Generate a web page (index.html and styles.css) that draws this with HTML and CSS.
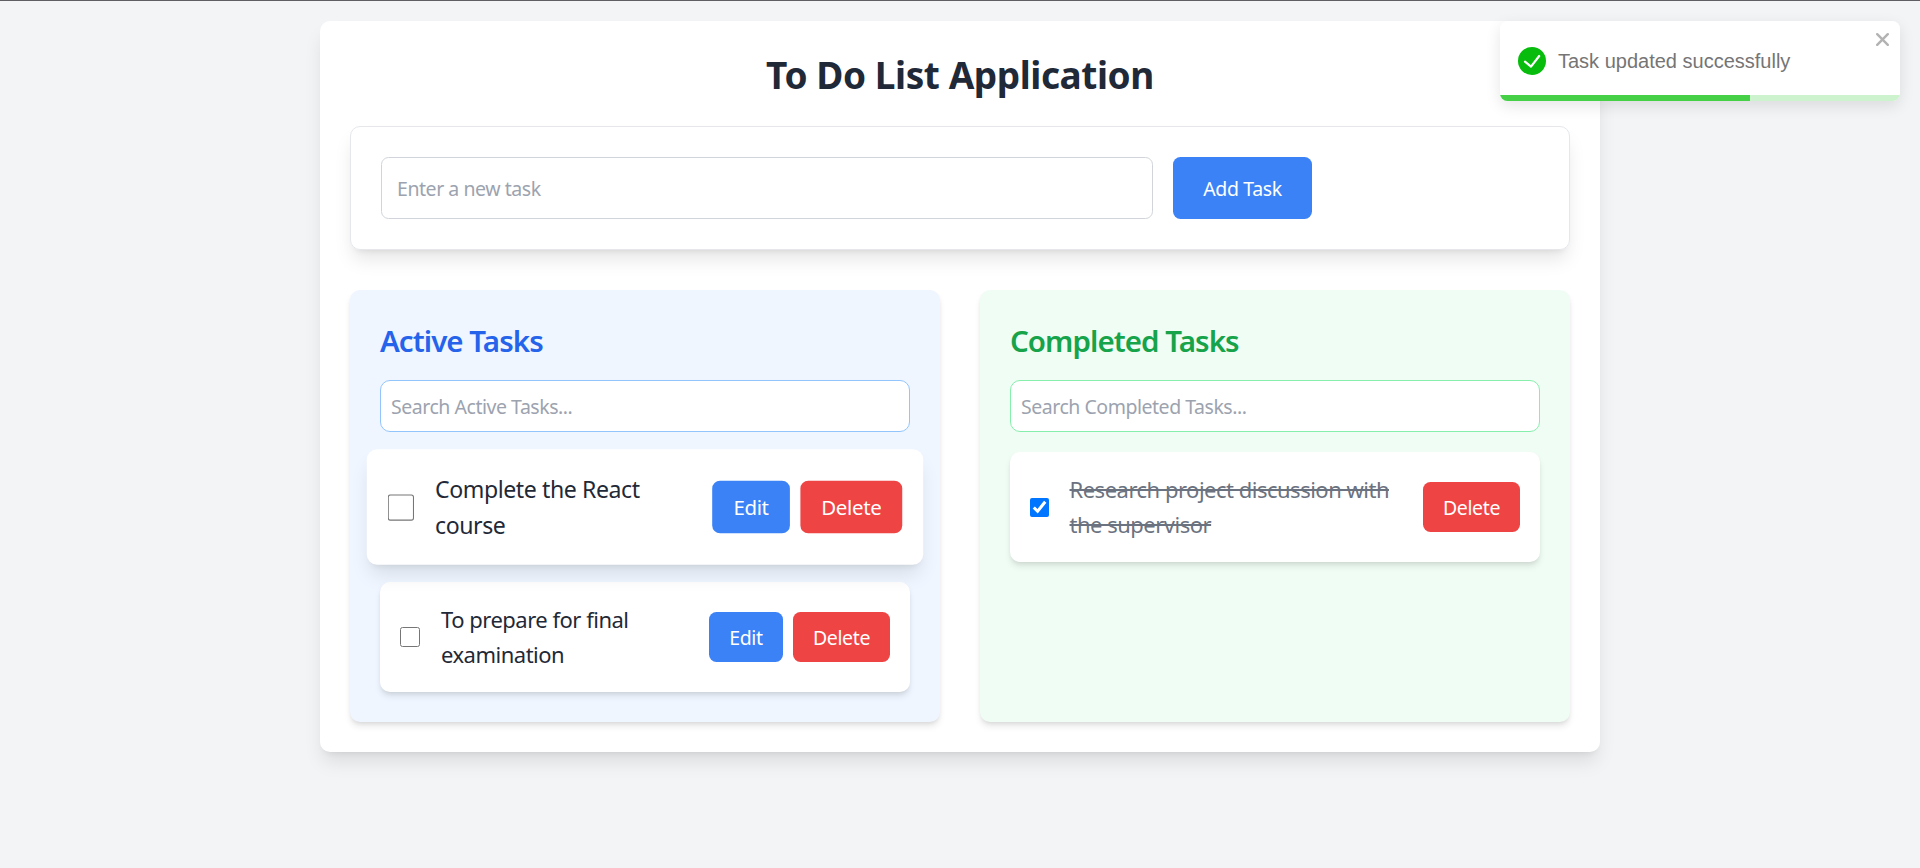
FILE: index.html
```html
<!DOCTYPE html>
<html lang="en">
<head>
<meta charset="utf-8">
<title>To Do List Application</title>
<link rel="stylesheet" href="styles.css">
</head>
<body>
<main class="app">
  <h1 class="title">To Do List Application</h1>
  <form class="task-form">
    <input class="task-input" type="text" placeholder="Enter a new task">
    <button class="btn btn-add" type="button">Add Task</button>
  </form>
  <div class="columns">
    <section class="column column-active">
      <h2 class="column-title">Active Tasks</h2>
      <input class="search" type="text" placeholder="Search Active Tasks...">
      <ul class="list">
        <li class="task task-hover">
          <input class="check" type="checkbox">
          <span class="task-text">Complete the React<br>course</span>
          <div class="actions">
            <button class="btn btn-edit" type="button">Edit</button>
            <button class="btn btn-delete" type="button">Delete</button>
          </div>
        </li>
        <li class="task">
          <input class="check" type="checkbox">
          <span class="task-text">To prepare for final<br>examination</span>
          <div class="actions">
            <button class="btn btn-edit" type="button">Edit</button>
            <button class="btn btn-delete" type="button">Delete</button>
          </div>
        </li>
      </ul>
    </section>
    <section class="column column-done">
      <h2 class="column-title">Completed Tasks</h2>
      <input class="search" type="text" placeholder="Search Completed Tasks...">
      <ul class="list">
        <li class="task">
          <input class="check" type="checkbox" checked>
          <span class="task-text task-text-done">Research project discussion with<br>the supervisor</span>
          <div class="actions">
            <button class="btn btn-delete" type="button">Delete</button>
          </div>
        </li>
      </ul>
    </section>
  </div>
</main>
<div class="toast" role="alert">
  <div class="toast-body">
    <svg class="toast-icon" viewBox="0 0 28 28"><circle cx="14" cy="14" r="14" fill="#07bc0c"/><path d="M7 14.600l6 5L21.200 9" fill="none" stroke="#fff" stroke-width="2.200" stroke-linecap="round" stroke-linejoin="round"/></svg>
    <span class="toast-text">Task updated successfully</span>
  </div>
  <svg class="toast-close" viewBox="0 0 13 13"><path d="M1.200 1.200l10.600 10.600M11.800 1.200L1.200 11.800" stroke="#b3b3b3" stroke-width="2.400" stroke-linecap="round"/></svg>
  <div class="toast-progress"><div class="toast-progress-fill"></div></div>
</div>
</body>
</html>
```
FILE: styles.css
```css
* { box-sizing: border-box; }

body {
  margin: 0;
  min-height: 868px;
  padding-top: 20px;
  border-top: 1px solid #5f5e63;
  background: #f3f4f6;
  font-family: "Noto Sans", "Open Sans", sans-serif;
  font-size: 19.5px;
  letter-spacing: -0.35px;
  color: #1f2937;
  overflow: hidden;
}

input, button { font: inherit; letter-spacing: inherit; margin: 0; }

.app {
  width: 1280px;
  height: 731px;
  margin: 0 auto;
  padding: 30px;
  background: #fff;
  border-radius: 10px;
  box-shadow: 0 12.5px 18.75px -3.75px rgba(0, 0, 0, .1), 0 5px 7.5px -5px rgba(0, 0, 0, .1);
}

.title {
  margin: 0;
  padding: 1px 0 29px;
  font-size: 37px;
  font-weight: 700;
  line-height: 45px;
  letter-spacing: -0.43px;
  text-align: center;
}

.task-form {
  display: flex;
  gap: 20px;
  height: 124px;
  margin-bottom: 40px;
  padding: 30px;
  border: 1px solid #e5e7eb;
  border-radius: 10px;
  box-shadow: 0 12.5px 18.75px -3.75px rgba(0, 0, 0, .1), 0 5px 7.5px -5px rgba(0, 0, 0, .1);
}

.task-input {
  width: 772px;
  height: 62px;
  padding: 0 15px;
  border: 1px solid #d1d5db;
  border-radius: 7.5px;
  background: #fff;
  letter-spacing: -0.45px;
}

input::placeholder { color: #9ca3af; opacity: 1; }

.btn {
  height: 50px;
  padding: 1px 0 0;
  border: 0;
  border-radius: 7.5px;
  color: #fff;
}
.btn-add { width: 139px; height: 62px; background: #3b82f6; }
.btn-edit { width: 74px; background: #3b82f6; }
.btn-delete { width: 97px; background: #ef4444; }

.columns {
  display: grid;
  grid-template-columns: 1fr 1fr;
  gap: 40px;
  height: 432px;
}

.column {
  padding: 30px;
  border-radius: 10px;
  box-shadow: 0 5px 7.5px -1.25px rgba(0, 0, 0, .1), 0 2.5px 5px -2.5px rgba(0, 0, 0, .1);
}
.column-active { background: #eff6ff; }
.column-done { background: #f0fdf4; }

.column-title {
  margin: 0;
  padding: 1px 0 19px;
  font-size: 29.5px;
  font-weight: 600;
  line-height: 40px;
  letter-spacing: -0.95px;
}
.column-active .column-title { color: #2563eb; }
.column-done .column-title { color: #16a34a; }

.search {
  display: block;
  width: 100%;
  height: 52px;
  padding: 0 10px;
  border: 1px solid #93c5fd;
  border-radius: 10px;
  background: #fff;
  letter-spacing: -0.47px;
}
.column-done .search { border-color: #86efac; }

.list {
  display: grid;
  gap: 20px;
  margin: 20px 0 0;
  padding: 0;
  list-style: none;
}

.task {
  display: flex;
  align-items: center;
  height: 110px;
  padding: 20px;
  background: #fff;
  border-radius: 10px;
  box-shadow: 0 5px 7.5px -1.25px rgba(0, 0, 0, .1), 0 2.5px 5px -2.5px rgba(0, 0, 0, .1);
}
.task-hover {
  transform: scale(1.05);
  box-shadow: 0 12.5px 18.75px -3.75px rgba(0, 0, 0, .1), 0 5px 7.5px -5px rgba(0, 0, 0, .1);
}

.check { width: 20px; height: 20px; accent-color: #0075ff; }
.task-hover .check { width: 25px; height: 25px; }
.column-done .check { width: 19px; height: 19px; }

.task-text {
  flex: 1;
  margin-left: 21px;
  font-size: 22px;
  line-height: 35px;
  letter-spacing: -0.5px;
  white-space: nowrap;
}
.task-hover .task-text { margin-left: 20px; letter-spacing: -0.4px; }
.task-text-done {
  margin-left: 20.5px;
  color: #6b7280;
  text-decoration: line-through;
  text-decoration-thickness: 2px;
}

.actions { display: flex; gap: 10px; }

.toast {
  position: absolute;
  top: 21px;
  right: 20px;
  display: flex;
  flex-direction: column;
  width: 400px;
  height: 80px;
  border-radius: 7.5px;
  overflow: hidden;
  background: #fff;
  box-shadow: 0 5px 15px rgba(0, 0, 0, .1);
  font-family: "Liberation Sans", Arial, sans-serif;
  letter-spacing: 0;
  color: #757575;
}
.toast-body { display: flex; flex: 1; align-items: center; gap: 12px; padding: 6px 18px 0; }
.toast-icon { width: 28px; height: 28px; }
.toast-text { font-size: 20px; }
.toast-close { position: absolute; top: 12px; right: 11px; width: 13px; height: 13px; }
.toast-progress { height: 6px; background: #cdf2ce; }
.toast-progress-fill { width: 249.5px; height: 6px; background: #45d048; }
```
